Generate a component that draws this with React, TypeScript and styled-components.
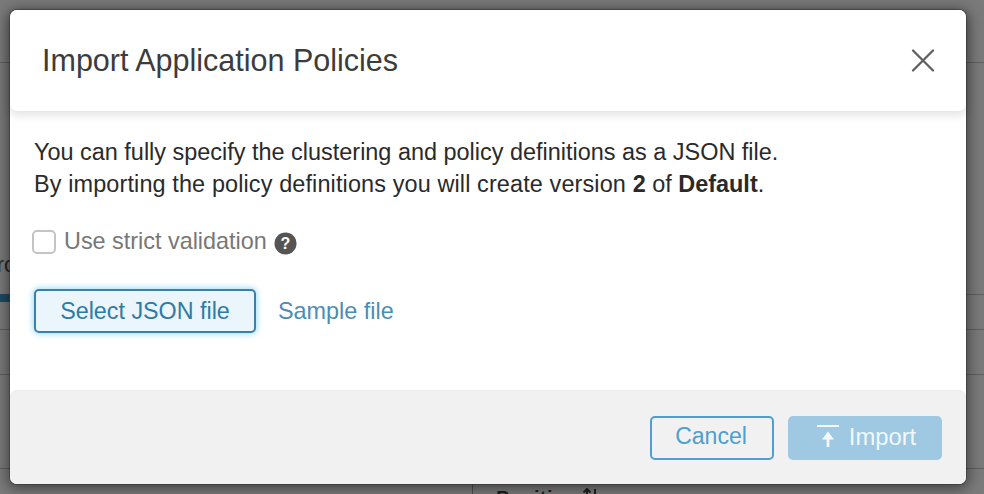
import React from "react";
import styled, { createGlobalStyle } from "styled-components";

const Global = createGlobalStyle`
  html, body { margin: 0; padding: 0; width: 984px; height: 494px; overflow: hidden; background: #777; }
  * { box-sizing: border-box; }
`;

const Page = styled.div`
  position: relative;
  width: 984px;
  height: 494px;
  overflow: hidden;
  background: #7a7a7a;
  font-family: "Liberation Sans", Arial, sans-serif;
`;

const BackdropLine = styled.div<{ $gap: number }>`
  position: relative;
  height: 1px;
  margin-top: ${(p) => p.$gap}px;
  background: #5f5f5f;
`;

const BackdropBar = styled.div`
  position: absolute;
  left: 0;
  top: 0;
  width: 12px;
  height: 8px;
  background: #1c4a62;
`;

const BackdropText = styled.div`
  margin-top: 193px;
  height: 18px;
  font-size: 22px;
  line-height: 18px;
  color: #262626;
  white-space: nowrap;
  margin-left: -18px;
`;

const BackdropColumnRule = styled.div`
  position: absolute;
  left: 472px;
  top: 467px;
  width: 1px;
  height: 27px;
  background: #505050;
`;

const BackdropHeading = styled.div`
  position: absolute;
  left: 496px;
  top: 488px;
  display: flex;
  align-items: flex-start;
  gap: 4px;
  font-size: 20px;
  line-height: 20px;
  font-weight: 700;
  color: #1f1f1f;
  letter-spacing: 0.4px;
  white-space: nowrap;
`;

const SortIcon = styled.svg`
  width: 18px;
  height: 16px;
  margin-top: 0;
`;

const Modal = styled.div`
  position: absolute;
  left: 10px;
  top: 10px;
  width: 956px;
  height: 474px;
  display: flex;
  flex-direction: column;
  background: #fff;
  border-radius: 7px;
  box-shadow: 0 0 0 1px rgba(50, 50, 50, 0.5), 0 2px 14px 2px rgba(0, 0, 0, 0.5);
`;

const Header = styled.header`
  flex: 0 0 101px;
  display: flex;
  align-items: center;
  justify-content: space-between;
  padding: 0 30px 2px 32px;
  background: #fff;
  border-radius: 7px;
  box-shadow: 0 4px 10px rgba(0, 0, 0, 0.12);
`;

const Title = styled.h1`
  margin: 0;
  font-size: 30.5px;
  line-height: 34px;
  font-weight: 400;
  color: #3c3c3c;
`;

const CloseButton = styled.button`
  display: flex;
  width: 26px;
  height: 26px;
  padding: 0;
  border: 0;
  background: none;
  color: #5f5f5f;
`;

const Body = styled.main`
  flex: 1;
  padding: 25px 24px 0;
`;

const Intro = styled.p`
  margin: 0;
  font-size: 23.45px;
  line-height: 32px;
  color: #2a2a2a;
`;

const IntroLine = styled.span<{ $spacing: number }>`
  letter-spacing: ${(p) => p.$spacing}px;
`;

const CheckRow = styled.label`
  display: flex;
  align-items: center;
  margin-top: 25px;
  height: 32px;
  font-size: 23.4px;
  color: #777;
`;

const CheckBox = styled.span`
  width: 24px;
  height: 24px;
  margin-left: -2px;
  margin-right: 8px;
  margin-top: 2px;
  border: 2px solid #c4c4c4;
  border-radius: 5px;
  background: #fff;
`;

const HelpIcon = styled.svg`
  width: 23px;
  height: 23px;
  margin-left: 7px;
  margin-top: 5px;
`;

const FileRow = styled.div`
  display: flex;
  align-items: center;
  gap: 22px;
  margin-top: 32px;
`;

const SelectButton = styled.button`
  width: 222px;
  height: 44px;
  padding: 0;
  border: 2px solid #3d7fa8;
  border-radius: 5px;
  background: #eaf6fc;
  box-shadow: 0 0 6px 1px #9adcf6;
  color: #2f7ba8;
  font: 400 23.3px "Liberation Sans", Arial, sans-serif;
`;

const SampleLink = styled.a`
  color: #4d8db5;
  font-size: 23.4px;
`;

const Footer = styled.footer`
  flex: 0 0 94px;
  display: flex;
  align-items: flex-start;
  justify-content: flex-end;
  gap: 14px;
  padding: 25px 24px 0;
  background: #f1f1f1;
  border-top: 1px solid #ebebeb;
  border-radius: 7px;
`;

const CancelButton = styled.button`
  width: 124px;
  height: 44px;
  padding: 0 2px 3px 0;
  border: 2px solid #4d9fd0;
  border-radius: 5px;
  background: transparent;
  color: #4d9fd0;
  font: 400 23px "Liberation Sans", Arial, sans-serif;
`;

const ImportButton = styled.button`
  display: flex;
  align-items: center;
  justify-content: center;
  gap: 10px;
  width: 154px;
  height: 44px;
  padding: 0 0 3px 3px;
  border: 0;
  border-radius: 5px;
  background: #9fc8e3;
  color: #f2f8fc;
  font: 400 23.8px "Liberation Sans", Arial, sans-serif;
`;

const ImportIcon = styled.svg`
  width: 22px;
  height: 24px;
`;

export default function App() {
  return (
    <Page>
      <Global />
      <BackdropLine $gap={62} />
      <BackdropText>Pro</BackdropText>
      <BackdropLine $gap={20}>
        <BackdropBar />
      </BackdropLine>
      <BackdropLine $gap={34} />
      <BackdropLine $gap={44} />
      <BackdropLine $gap={93} />
      <BackdropColumnRule />
      <BackdropHeading>
        Position
        <SortIcon viewBox="0 0 18 16" fill="none" stroke="#1f1f1f" strokeWidth="2">
          <path d="M5 1V16M1.5 4.5 5 1 8.5 4.5M13 1V16" />
        </SortIcon>
      </BackdropHeading>
      <Modal>
        <Header>
          <Title>Import Application Policies</Title>
          <CloseButton aria-label="Close">
            <svg viewBox="0 0 26 26" width="26" height="26" fill="none" stroke="currentColor" strokeWidth="2.3" strokeLinecap="round">
              <path d="M3 3.5 23 23.5M23 3.5 3 23.5" />
            </svg>
          </CloseButton>
        </Header>
        <Body>
          <Intro>
            You can fully specify the clustering and policy definitions as a JSON file.
            <br />
            <IntroLine $spacing={0.12}>By importing the policy definitions you will create version </IntroLine>
            <b>2</b> of <b>Default</b>.
          </Intro>
          <CheckRow>
            <CheckBox />
            Use strict validation
            <HelpIcon viewBox="0 0 23 23">
              <circle cx="11.5" cy="11.5" r="11" fill="#555" />
              <text x="11.5" y="17" textAnchor="middle" fontSize="16" fontWeight="700" fill="#fff" fontFamily="Liberation Sans">?</text>
            </HelpIcon>
          </CheckRow>
          <FileRow>
            <SelectButton>Select JSON file</SelectButton>
            <SampleLink>Sample file</SampleLink>
          </FileRow>
        </Body>
        <Footer>
          <CancelButton>Cancel</CancelButton>
          <ImportButton>
            <ImportIcon viewBox="0 0 22 24" fill="#f2f8fc">
              <rect x="0" y="0" width="22" height="2" />
              <path d="M11 6.5 17 14.5H12.4V22H9.6V14.5H5Z" />
            </ImportIcon>
            Import
          </ImportButton>
        </Footer>
      </Modal>
    </Page>
  );
}
